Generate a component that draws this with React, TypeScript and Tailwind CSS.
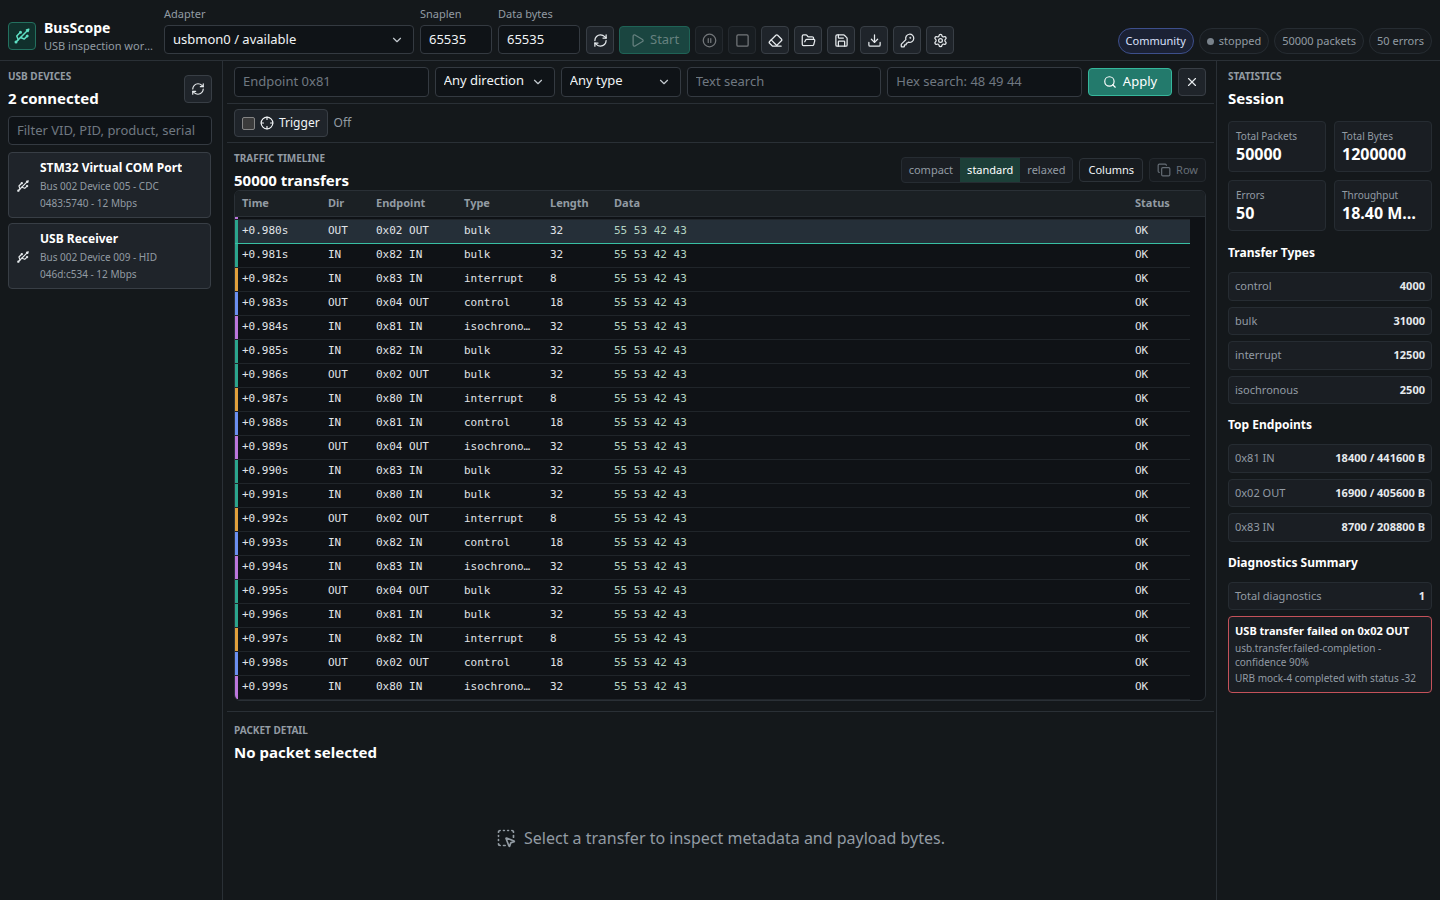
import React, { useState } from 'react';
import {
  ChevronDown,
  CirclePause,
  Copy,
  Crosshair,
  Download,
  Eraser,
  FolderOpen,
  KeyRound,
  Play,
  RefreshCw,
  Save,
  Search,
  Settings,
  Square,
  SquareDashedMousePointer,
  Usb,
  X,
} from 'lucide-react';

type TransferType = 'bulk' | 'interrupt' | 'control' | 'isochronous';

interface Transfer {
  time: string;
  endpoint: string;
  type: TransferType;
}

interface IconButtonProps {
  label: string;
  disabled?: boolean;
  children: React.ReactNode;
}

const ENDPOINTS = [
  '0x02 OUT', '0x82 IN', '0x83 IN', '0x04 OUT', '0x81 IN',
  '0x82 IN', '0x02 OUT', '0x80 IN', '0x81 IN', '0x04 OUT',
  '0x83 IN', '0x80 IN', '0x02 OUT', '0x82 IN', '0x83 IN',
  '0x04 OUT', '0x81 IN', '0x82 IN', '0x02 OUT', '0x80 IN',
];

const TYPE_CYCLE: TransferType[] = ['bulk', 'bulk', 'interrupt', 'control', 'isochronous'];

const transfers: Transfer[] = ENDPOINTS.map((endpoint, i) => ({
  time: `+0.${980 + i}s`,
  endpoint,
  type: TYPE_CYCLE[i % TYPE_CYCLE.length],
}));

const LENGTHS: Record<TransferType, number> = {
  bulk: 32,
  interrupt: 8,
  control: 18,
  isochronous: 32,
};

const TYPE_BARS: Record<TransferType, string> = {
  bulk: 'shadow-[inset_3px_0_0_#2ba58d]',
  interrupt: 'shadow-[inset_3px_0_0_#e0a03c]',
  control: 'shadow-[inset_3px_0_0_#6b8ff0]',
  isochronous: 'shadow-[inset_3px_0_0_#bb76dc]',
};

const devices = [
  { name: 'STM32 Virtual COM Port', location: 'Bus 002 Device 005 - CDC', id: '0483:5740 - 12 Mbps' },
  { name: 'USB Receiver', location: 'Bus 002 Device 009 - HID', id: '046d:c534 - 12 Mbps' },
];

const stats = [
  { label: 'Total Packets', value: '50000' },
  { label: 'Total Bytes', value: '1200000' },
  { label: 'Errors', value: '50' },
  { label: 'Throughput', value: '18.40 MB/s' },
];

const transferTypes = [
  ['control', '4000'],
  ['bulk', '31000'],
  ['interrupt', '12500'],
  ['isochronous', '2500'],
];

const topEndpoints = [
  ['0x81 IN', '18400 / 441600 B'],
  ['0x02 OUT', '16900 / 405600 B'],
  ['0x83 IN', '8700 / 208800 B'],
];

const fieldClass =
  'w-full rounded border border-[#343a41] bg-[#0f1317] px-2 pb-0.5 text-[13px] text-[#f1f4f6] placeholder:text-[#6f7881] outline-none';

const IconButton: React.FC<IconButtonProps> = ({ label, disabled = false, children }) => (
  <button
    type="button"
    aria-label={label}
    disabled={disabled}
    className="flex size-7 shrink-0 items-center justify-center rounded border border-[#383e45] bg-[#1f242a] text-[#e6eaed] disabled:opacity-45"
  >
    {children}
  </button>
);

const SelectField: React.FC<{ label: string; option: string; className: string }> = ({ label, option, className }) => (
  <div className="relative">
    <select aria-label={label} className={`${fieldClass} appearance-none ${className}`}>
      <option>{option}</option>
    </select>
    <ChevronDown size={14} className="pointer-events-none absolute top-1/2 right-2.5 -translate-y-1/2 text-[#c3c9ce]" />
  </div>
);

const PanelTitle: React.FC<{ eyebrow: string; title: string }> = ({ eyebrow, title }) => (
  <div>
    <p className="text-[10px] leading-4 font-bold text-[#929ba3] uppercase">{eyebrow}</p>
    <h2 className="mt-1 text-[15px] leading-5 font-bold text-white">{title}</h2>
  </div>
);

const MetricList: React.FC<{ rows: string[][] }> = ({ rows }) => (
  <dl className="flex flex-col gap-1.5">
    {rows.map(([name, value]) => (
      <div
        key={name}
        className="flex items-center justify-between rounded border border-[#262c32] bg-[#1a1e23] px-1.5 py-[5px] text-[11px] leading-normal"
      >
        <dt className="text-[#929ba3]">{name}</dt>
        <dd className="font-bold text-[#e6eaed]">{value}</dd>
      </div>
    ))}
  </dl>
);

const Toolbar: React.FC = () => (
  <header className="flex items-end justify-between gap-4 border-b border-[#2a3036] px-2 pt-1.5 pb-1.5">
    <div className="flex min-w-0 items-end gap-1.5">
      <div className="mr-1 flex w-[146px] shrink-0 items-center gap-2">
        <div className="flex size-7 shrink-0 items-center justify-center rounded border border-[#23705f] bg-[#10302c] text-[#5fe0c4]">
          <Usb size={18} />
        </div>
        <div className="min-w-0">
          <h1 className="text-sm leading-5 font-bold text-white">BusScope</h1>
          <p className="truncate text-[11px] leading-4 text-[#929ba3]">USB inspection workbench</p>
        </div>
      </div>
      <label className="block w-[250px] text-[11px] leading-4 text-[#929ba3]">
        Adapter
        <div className="mt-[3px]">
          <SelectField label="Adapter" option="usbmon0 / available" className="h-[29px]" />
        </div>
      </label>
      <label className="block w-[72px] text-[11px] leading-4 text-[#929ba3]">
        Snaplen
        <input className={`${fieldClass} mt-[3px] block h-[29px]`} defaultValue="65535" />
      </label>
      <label className="block w-[82px] text-[11px] leading-4 text-[#929ba3]">
        Data bytes
        <input className={`${fieldClass} mt-[3px] block h-[29px]`} defaultValue="65535" />
      </label>
      <div className="flex items-center gap-[5px]">
        <IconButton label="Refresh adapters"><RefreshCw size={15} /></IconButton>
        <button
          type="button"
          disabled
          className="flex h-7 items-center justify-center gap-[5px] rounded border border-[#1f6356] bg-[#1a4540] px-2.5 text-[13px] text-[#66817f]"
        >
          <Play size={15} />
          Start
        </button>
        <IconButton label="Pause" disabled><CirclePause size={15} /></IconButton>
        <IconButton label="Stop" disabled><Square size={15} /></IconButton>
        <IconButton label="Clear"><Eraser size={15} /></IconButton>
        <IconButton label="Open"><FolderOpen size={15} /></IconButton>
        <IconButton label="Save"><Save size={15} /></IconButton>
        <IconButton label="Export"><Download size={15} /></IconButton>
        <IconButton label="License"><KeyRound size={15} /></IconButton>
        <IconButton label="Settings"><Settings size={15} /></IconButton>
      </div>
    </div>
    <div className="flex shrink-0 items-center gap-[5px] text-[11px] leading-4 text-[#929ba3]">
      <span className="rounded-full border border-[#3d4f8c] bg-[#1b2134] px-[7px] py-1 text-[#d9e0fb]">Community</span>
      <span className="flex items-center gap-[5px] rounded-full border border-[#262c32] bg-[#171b1f] px-[7px] py-1">
        <span className="size-[7px] rounded-full bg-[#79828b]" />
        stopped
      </span>
      <span className="rounded-full border border-[#262c32] bg-[#171b1f] px-[7px] py-1">50000 packets</span>
      <span className="rounded-full border border-[#262c32] bg-[#171b1f] px-[7px] py-1">50 errors</span>
    </div>
  </header>
);

const DevicePanel: React.FC = () => (
  <aside className="w-[223px] shrink-0 border-r border-[#2a3036] pt-[7px] pr-[10px] pl-2">
    <div className="flex items-center justify-between">
      <PanelTitle eyebrow="USB Devices" title="2 connected" />
      <div className="pt-0.5">
        <IconButton label="Refresh devices"><RefreshCw size={14} /></IconButton>
      </div>
    </div>
    <input
      aria-label="Filter devices"
      placeholder="Filter VID, PID, product, serial"
      className={`${fieldClass} mt-2 block h-[29px]`}
    />
    <ul className="mt-[7px] flex flex-col gap-[5px] pr-px">
      {devices.map((device) => (
        <li key={device.name}>
          <button
            type="button"
            className="flex w-full items-center gap-2.5 rounded border border-[#383e45] bg-[#1f242a] pt-1.5 pr-2 pb-[5px] pl-[7px] text-left text-[10px] leading-[17px] text-[#929ba3]"
          >
            <Usb size={14} className="shrink-0 text-[#e6eaed]" />
            <span className="min-w-0">
              <span className="mb-px block truncate text-xs leading-[18px] font-bold text-white">{device.name}</span>
              <span className="block">{device.location}</span>
              <span className="block">{device.id}</span>
            </span>
          </button>
        </li>
      ))}
    </ul>
  </aside>
);

const FilterBar: React.FC = () => (
  <>
    <form
      className="grid grid-cols-[1fr_120px_120px_1fr_1fr_auto_auto] items-center gap-1.5 border-b border-[#2a3036] py-1.5 pr-2 pl-[7px]"
      onSubmit={(e) => e.preventDefault()}
    >
      <input aria-label="Endpoint" placeholder="Endpoint 0x81" className={`${fieldClass} h-[30px]`} />
      <SelectField label="Direction" option="Any direction" className="h-[30px]" />
      <SelectField label="Transfer type" option="Any type" className="h-[30px]" />
      <input aria-label="Text search" placeholder="Text search" className={`${fieldClass} h-[30px]`} />
      <input aria-label="Hex search" placeholder="Hex search: 48 49 44" className={`${fieldClass} h-[30px]`} />
      <button
        type="submit"
        className="flex h-7 w-[84px] items-center justify-center gap-1.5 rounded border border-[#35b79c] bg-[#237a6c] text-[13px] text-white"
      >
        <Search size={14} />
        Apply
      </button>
      <IconButton label="Clear filters"><X size={14} /></IconButton>
    </form>
    <div className="flex items-center gap-1.5 border-b border-[#2a3036] px-[7px] py-[5px] text-xs text-[#929ba3]">
      <label className="flex h-7 items-center gap-[5px] rounded border border-[#383e45] bg-[#1f242a] px-[7px] text-[#f1f4f6]">
        <input
          type="checkbox"
          className="size-[13px] appearance-none rounded-xs border border-[#858585] bg-[#3b3b3b] checked:bg-[#35b79c]"
        />
        <Crosshair size={14} />
        Trigger
      </label>
      Off
    </div>
  </>
);

const Timeline: React.FC = () => {
  const [density, setDensity] = useState('standard');
  const [selected, setSelected] = useState(0);

  return (
    <section className="border-b border-[#2a3036] pt-[7px] pr-2 pb-2.5 pl-[7px]">
      <div className="flex items-center justify-between">
        <PanelTitle eyebrow="Traffic Timeline" title="50000 transfers" />
        <div className="flex items-center gap-1.5 text-[11px] leading-4">
          <div className="flex overflow-hidden rounded border border-[#262c32] bg-[#1a1e23]">
            {['compact', 'standard', 'relaxed'].map((name) => (
              <button
                key={name}
                type="button"
                aria-pressed={density === name}
                onClick={() => setDensity(name)}
                className="px-[7px] py-1 text-[#929ba3] aria-pressed:bg-[#1c3f38] aria-pressed:text-white"
              >
                {name}
              </button>
            ))}
          </div>
          <button type="button" className="rounded border border-[#2c3238] bg-[#171b1f] px-2 py-[3px] text-[#f1f4f6]">
            Columns
          </button>
          <button
            type="button"
            disabled
            className="flex items-center gap-[5px] rounded border border-[#23282d] bg-[#171b1f] px-[7px] py-[3px] text-[#666e76]"
          >
            <Copy size={14} />
            Row
          </button>
        </div>
      </div>
      <div className="overflow-hidden rounded-md border border-[#2a3036] bg-[#0f1216]">
        <table className="w-full table-fixed border-separate border-spacing-0 text-left">
          <colgroup>
            <col className="w-[86px]" />
            <col className="w-12" />
            <col className="w-[88px]" />
            <col className="w-[86px]" />
            <col className="w-16" />
            <col />
            <col className="w-[62px]" />
            <col className="w-[15px]" />
          </colgroup>
          <thead>
            <tr className="h-[26px] bg-[#1b2024] text-[11px] leading-4 text-[#929ba3]">
              {['Time', 'Dir', 'Endpoint', 'Type', 'Length', 'Data', 'Status'].map((name) => (
                <th key={name} className="border-b border-[#2a3036] px-[7px] pb-0.5 font-bold">{name}</th>
              ))}
              <td className="border-b border-[#2a3036]" />
            </tr>
          </thead>
          <tbody className="font-['DejaVu_Sans_Mono',monospace] text-[11px] leading-4 text-[#e0e4e8]">
            {/* tail of the row scrolled under the header */}
            <tr className="h-[3px]" aria-hidden="true">
              <td className="border-b border-[#20252a] p-0 shadow-[inset_3px_0_0_#bb76dc]" />
              <td colSpan={6} className="border-b border-[#20252a] p-0" />
              <td className="p-0" />
            </tr>
            {transfers.map((transfer, i) => {
              const cell = i === selected
                ? 'truncate border-b border-[#38bfa3] bg-[#252f38] px-[7px] pb-0.5'
                : 'truncate border-b border-[#20252a] px-[7px] pb-0.5';
              return (
                <tr key={transfer.time} className="h-6" onClick={() => setSelected(i)}>
                  <td className={`${cell} ${TYPE_BARS[transfer.type]}`}>{transfer.time}</td>
                  <td className={cell}>{transfer.endpoint.split(' ')[1]}</td>
                  <td className={cell}>{transfer.endpoint}</td>
                  <td className={cell}>{transfer.type}</td>
                  <td className={cell}>{LENGTHS[transfer.type]}</td>
                  <td className={`${cell} text-[#b3d3c2]`}>55 53 42 43</td>
                  <td className={cell}>OK</td>
                  <td />
                </tr>
              );
            })}
          </tbody>
        </table>
      </div>
    </section>
  );
};

const StatisticsPanel: React.FC = () => (
  <aside className="w-56 shrink-0 border-l border-[#2a3036] pt-[7px] pr-2 pl-[11px]">
    <PanelTitle eyebrow="Statistics" title="Session" />
    <dl className="mt-[13px] grid grid-cols-2 gap-2">
      {stats.map((stat) => (
        <div key={stat.label} className="min-w-0 rounded border border-[#262c32] bg-[#1a1e23] px-[7px] py-1.5">
          <dt className="text-[10px] leading-4 text-[#929ba3]">{stat.label}</dt>
          <dd className="truncate text-base leading-[21px] font-bold text-white">{stat.value}</dd>
        </div>
      ))}
    </dl>
    <h3 className="mt-[13px] mb-2.5 text-xs leading-[18px] font-bold text-white">Transfer Types</h3>
    <MetricList rows={transferTypes} />
    <h3 className="mt-3 mb-2.5 text-xs leading-[18px] font-bold text-white">Top Endpoints</h3>
    <MetricList rows={topEndpoints} />
    <h3 className="mt-3 mb-2.5 text-xs leading-[18px] font-bold text-white">Diagnostics Summary</h3>
    <MetricList rows={[['Total diagnostics', '1']]} />
    <article className="mt-1.5 rounded border border-[#c4525a] bg-[#1a1e23] px-1.5 pt-[5px] pb-[7px] text-[10px] leading-[14px] text-[#929ba3]">
      <h4 className="mb-px text-[11px] leading-[18px] font-bold text-white">USB transfer failed on 0x02 OUT</h4>
      <p>usb.transfer.failed-completion - confidence 90%</p>
      <p className="mt-0.5">URB mock-4 completed with status -32</p>
    </article>
  </aside>
);

const App: React.FC = () => {
  return (
    <div className="flex min-h-screen flex-col bg-[#14181b] font-['Noto_Sans',sans-serif] text-[#e6eaed]">
      <Toolbar />
      <div className="flex flex-1">
        <DevicePanel />
        <main className="mr-0.5 ml-1 flex min-w-0 flex-1 flex-col">
          <FilterBar />
          <Timeline />
          <section className="flex flex-1 flex-col px-[7px] pt-2.5">
            <PanelTitle eyebrow="Packet Detail" title="No packet selected" />
            <div className="flex flex-1 items-center justify-center gap-2 pt-3.5 text-base text-[#929ba3]">
              <SquareDashedMousePointer size={20} />
              Select a transfer to inspect metadata and payload bytes.
            </div>
          </section>
        </main>
        <StatisticsPanel />
      </div>
    </div>
  );
};

export default App;
